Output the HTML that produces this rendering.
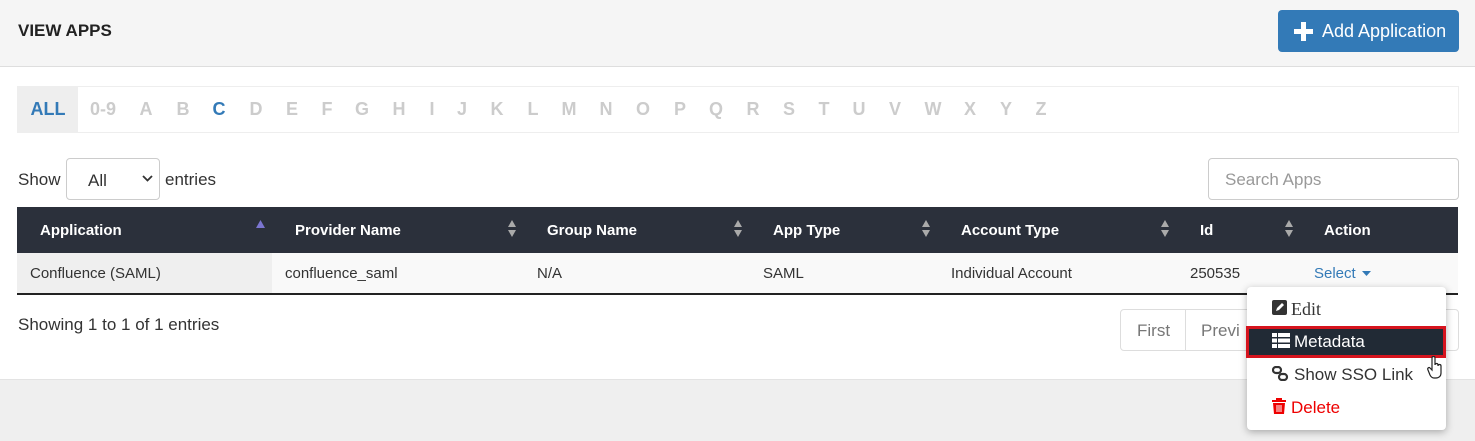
<!DOCTYPE html><html><head><style>
*{box-sizing:border-box;margin:0;padding:0}
body{width:1475px;height:441px;background:#efefef;font-family:"Liberation Sans",sans-serif;position:relative;overflow:hidden;color:#333}
.a{position:absolute}
.hdr{left:0;top:0;width:1475px;height:67px;background:#f5f5f5;border-bottom:1px solid #dedede}
.body{left:0;top:67px;width:1475px;height:313px;background:#fff;border-bottom:1px solid #e3e3e3}
.lt{top:99px;font-size:18px;font-weight:bold;color:#ccc;transform:translateX(-50%)}
.th{top:222px;color:#fff;font-weight:bold;font-size:15px}
.td{top:265px;font-size:15px;color:#333}
.sort{top:220px;width:8px;height:18px}
</style></head><body>
<div class="a hdr"></div>
<div class="a" style="left:18px;top:21px;font-weight:bold;font-size:17px;color:#222">VIEW APPS</div>
<div class="a" style="left:1278px;top:10px;width:181px;height:42px;background:#337ab7;border-radius:4px;color:#fff;font-size:18px;line-height:42px;padding-left:44px">Add Application</div>
<svg class="a" style="left:1294px;top:22px" width="19" height="19"><path d="M7 0h5v7h7v5h-7v7h-5v-7h-7v-5h7z" fill="#fff"/></svg>
<div class="a body"></div>
<div class="a" style="left:17px;top:86px;width:1442px;height:47px;border:1px solid #eee"></div>
<div class="a" style="left:18px;top:87px;width:60px;height:45px;background:#eeeeee"></div>
<div class="a lt" style="left:48px;color:#337ab7">ALL</div>
<div class="a lt" style="left:103px">0-9</div>
<div class="a lt" style="left:146px">A</div><div class="a lt" style="left:183px">B</div><div class="a lt" style="left:219px;color:#337ab7">C</div><div class="a lt" style="left:256px">D</div><div class="a lt" style="left:292px">E</div><div class="a lt" style="left:327px">F</div><div class="a lt" style="left:362px">G</div><div class="a lt" style="left:399px">H</div><div class="a lt" style="left:432px">I</div><div class="a lt" style="left:462px">J</div><div class="a lt" style="left:497px">K</div><div class="a lt" style="left:533px">L</div><div class="a lt" style="left:569px">M</div><div class="a lt" style="left:606px">N</div><div class="a lt" style="left:643px">O</div><div class="a lt" style="left:680px">P</div><div class="a lt" style="left:716px">Q</div><div class="a lt" style="left:753px">R</div><div class="a lt" style="left:789px">S</div><div class="a lt" style="left:824px">T</div><div class="a lt" style="left:859px">U</div><div class="a lt" style="left:895px">V</div><div class="a lt" style="left:933px">W</div><div class="a lt" style="left:970px">X</div><div class="a lt" style="left:1006px">Y</div><div class="a lt" style="left:1041px">Z</div>
<div class="a" style="left:18px;top:170px;font-size:17px">Show</div>
<div class="a" style="left:66px;top:158px;width:94px;height:42px;border:1px solid #ccc;border-radius:4px;font-size:17px;padding:12px 0 0 21px">All</div>
<svg class="a" style="left:142px;top:175px" width="11" height="8"><path d="M1 1l4.5 4.5L10 1" stroke="#333" stroke-width="1.8" fill="none"/></svg>
<div class="a" style="left:165px;top:170px;font-size:17px">entries</div>
<div class="a" style="left:1208px;top:158px;width:251px;height:42px;border:1px solid #ccc;border-radius:4px;font-size:17px;color:#999;padding:11px 0 0 16px">Search Apps</div>
<div class="a" style="left:17px;top:207px;width:1441px;height:46px;background:#2b303b"></div>
<div class="a" style="left:17px;top:253px;width:1441px;height:42px;background:#f9f9f9;border-bottom:2px solid #222"></div>
<div class="a" style="left:17px;top:253px;width:255px;height:40px;background:#efefef"></div>
<div class="a th" style="left:40px">Application</div><div class="a th" style="left:295px">Provider Name</div><div class="a th" style="left:547px">Group Name</div><div class="a th" style="left:773px">App Type</div><div class="a th" style="left:961px">Account Type</div><div class="a th" style="left:1200px">Id</div><div class="a th" style="left:1324px">Action</div>
<svg class="a" style="left:256px;top:220px" width="9" height="8"><path d="M0 8L4.5 0L9 8z" fill="#7b75d0"/></svg>
<svg class="a sort" style="left:508px"><path d="M0 7L4 0L8 7zM0 10L4 17L8 10z" fill="#aaa"/></svg>
<svg class="a sort" style="left:734px"><path d="M0 7L4 0L8 7zM0 10L4 17L8 10z" fill="#aaa"/></svg>
<svg class="a sort" style="left:922px"><path d="M0 7L4 0L8 7zM0 10L4 17L8 10z" fill="#aaa"/></svg>
<svg class="a sort" style="left:1161px"><path d="M0 7L4 0L8 7zM0 10L4 17L8 10z" fill="#aaa"/></svg>
<svg class="a sort" style="left:1285px"><path d="M0 7L4 0L8 7zM0 10L4 17L8 10z" fill="#aaa"/></svg>
<div class="a td" style="left:30px">Confluence (SAML)</div><div class="a td" style="left:285px">confluence_saml</div><div class="a td" style="left:537px">N/A</div><div class="a td" style="left:763px">SAML</div><div class="a td" style="left:951px">Individual Account</div><div class="a td" style="left:1190px">250535</div>
<div class="a td" style="left:1314px;color:#337ab7">Select</div>
<svg class="a" style="left:1362px;top:271px" width="9" height="5"><path d="M0 0h9L4.5 5z" fill="#337ab7"/></svg>
<div class="a" style="left:18px;top:315px;font-size:17px">Showing 1 to 1 of 1 entries</div>
<div class="a" style="left:1120px;top:309px;width:339px;height:42px;border:1px solid #ddd;border-radius:4px"></div>
<div class="a" style="left:1185px;top:309px;width:1px;height:42px;background:#ddd"></div>
<div class="a" style="left:1137px;top:321px;font-size:17px;color:#777">First</div>
<div class="a" style="left:1201px;top:321px;font-size:17px;color:#777">Previ</div>
<div class="a" style="left:1247px;top:287px;width:199px;height:143px;background:#fff;border-radius:4px;box-shadow:0 2px 8px rgba(0,0,0,.3)"></div>
<div class="a" style="left:1272px;top:300px;width:15px;height:15px;background:#333;border-radius:2px"></div>
<svg class="a" style="left:1274px;top:302px" width="11" height="11"><path d="M2 9l1-3 5-5 2 2-5 5z" fill="#fff"/></svg>
<div class="a" style="left:1291px;top:299px;font-family:'Liberation Serif',serif;font-size:18px;color:#333">Edit</div>
<div class="a" style="left:1246px;top:326px;width:200px;height:32px;background:#212a35;border:3px solid #d6141e"></div>
<svg class="a" style="left:1272px;top:333px" width="18" height="15"><path d="M0 0h5v4H0zM6 0h12v4H6zM0 5.5h5v4H0zM6 5.5h12v4H6zM0 11h5v4H0zM6 11h12v4H6z" fill="#fff"/></svg>
<div class="a" style="left:1294px;top:332px;font-size:17px;color:#fff">Metadata</div>
<svg class="a" style="left:1272px;top:366px" width="17" height="15"><g stroke="#333" stroke-width="2.2" fill="none"><rect x="1" y="1" width="8" height="6" rx="3"/><rect x="7" y="8" width="8" height="6" rx="3"/></g></svg>
<div class="a" style="left:1294px;top:365px;font-size:17px;color:#333">Show SSO Link</div>
<svg class="a" style="left:1272px;top:398px" width="14" height="16"><path d="M4 0h6v2h4v2H0V2h4zM1 5h12l-1 11H2z" fill="#e00"/><path d="M5 7v7M7 7v7M9 7v7" stroke="#fff" stroke-width="1"/></svg>
<div class="a" style="left:1291px;top:398px;font-size:17px;color:#e00">Delete</div>
<svg class="a" style="left:1427px;top:356px" width="16" height="24"><path d="M5 2c0-2 3-2 3 0v7c0-2 3-2 3 0v1c0-2 3-2 3 0v7c0 3-2 5-5 5H7c-2 0-3-1-4-3L1 14c-1-2 1-3 2-2l2 2z" fill="#fff" stroke="#222" stroke-width="1.2"/></svg>
</body></html>
